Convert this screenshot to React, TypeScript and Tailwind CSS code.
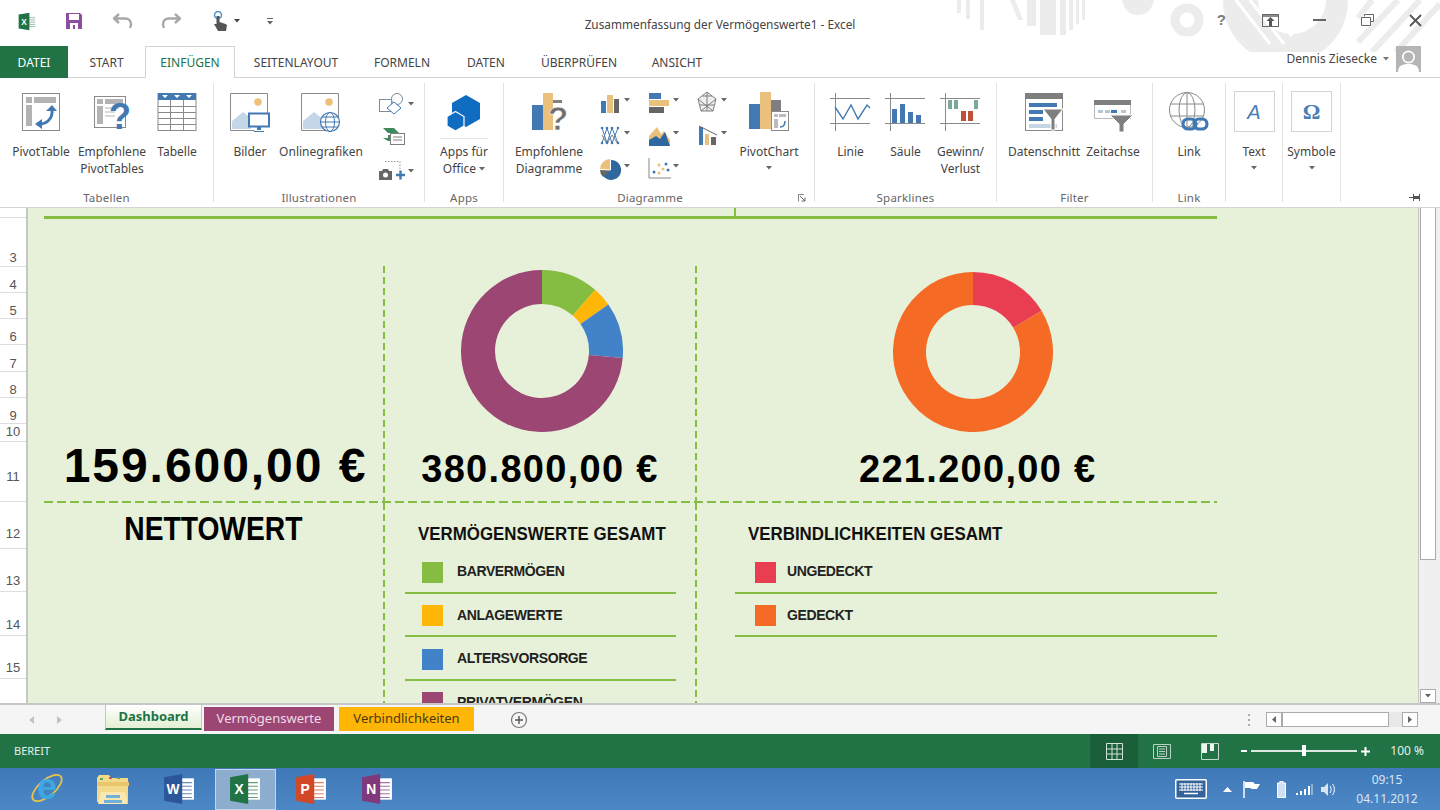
import type { ReactNode } from "react";

const BLUE = "#4379b3";
const TAN = "#e9c07c";
const GREY = "#7f7f7f";
const LINE = "#8a8a8a";

function Caret({ color = "#555" }: { color?: string }) {
  return (
    <svg width="6" height="4" viewBox="0 0 6 4" className="shrink-0">
      <path d="M0 0h6L3 3.5z" fill={color} />
    </svg>
  );
}

function OfficeIcon({ letter, color, size = 32 }: { letter: string; color: string; size?: number }) {
  return (
    <svg width={size} height={size} viewBox="0 0 30 30" className="overflow-visible">
      <rect x="14" y="5" width="15" height="20" fill="#fff" />
      <path d="M17 9h10M17 12.5h10M17 16h10M17 19.5h10M17 23h10" stroke={color} strokeWidth="1" opacity="0.7" />
      <path d="M1 4 18 1v28L1 26z" fill={color} />
      <text x="9.5" y="20" textAnchor="middle" fontFamily="Liberation Sans" fontWeight="700" fontSize="13" fill="#fff">
        {letter}
      </text>
    </svg>
  );
}

function TitleArt() {
  return (
    <svg width="490" height="52" viewBox="950 0 490 52" className="absolute right-0 top-0">
      <g fill="#ececec">
        <path d="M957 0h4v13h-4zM966 0h4v19h-4zM980 0h4v30h-4zM1010 0h5l8 20h-5zM1027 0h9v26h-9zM1040 0h16v35h-16zM1060 0h6v35h-6zM1069 0h4v30h-4zM1076 0h3v24h-3zM1082 0h3v20h-3z" />
        <path d="M1122 0h32c-2 10-8 15-16 15s-14-5-16-15z" />
      </g>
      <circle cx="1187" cy="20" r="12" fill="none" stroke="#ececec" strokeWidth="9" />
      <path d="M1223 0h125c0 22-10 40-27 52h-71c-17-12-27-30-27-52z" fill="#ececec" />
      <path d="M1236 0l34 44M1250 0l34 44M1264 0l28 36" stroke="#fff" strokeWidth="3" />
      <circle cx="1292" cy="0" r="34" fill="#fff" />
      <path d="M1372 0l-14 18M1398 0l-40 42M1420 0l-48 52M1440 4l-44 48" stroke="#ececec" strokeWidth="6" />
    </svg>
  );
}

function QuickAccess() {
  return (
    <div className="flex h-[46px] items-center pb-[4px] pl-[18px]">
      <div className="w-[47px]">
        <OfficeIcon letter="X" color="#217346" size={19} />
      </div>
      <svg width="18" height="18" viewBox="0 0 18 18" className="mr-[30px]">
        <path d="M1 1h14l2 2v14H1z" fill="#8e4ea0" />
        <rect x="4" y="2" width="10" height="6" fill="#fff" />
        <rect x="5" y="11" width="8" height="6" fill="#fff" />
        <rect x="8" y="13" width="2" height="4" fill="#8e4ea0" />
      </svg>
      <svg width="20" height="16" viewBox="0 0 20 16" className="mr-[28px]">
        <path d="M6 1 1 5.500 6 10M2 5.500h10c4 0 6 2.500 6 5.500 0 1.500-.5 3-1 4" fill="none" stroke="#a8a8a8" strokeWidth="2.400" />
      </svg>
      <svg width="20" height="16" viewBox="0 0 20 16" className="mr-[31px]">
        <path d="M14 1l5 4.500L14 10M18 5.500H8c-4 0-6 2.500-6 5.500 0 1.500.5 3 1 4" fill="none" stroke="#a8a8a8" strokeWidth="2.400" />
      </svg>
      <svg width="17" height="20" viewBox="0 0 17 20" className="mr-[5px]">
        <circle cx="6" cy="4" r="3.500" fill="none" stroke="#4a90c8" strokeWidth="1.500" />
        <path d="M4.500 5h3v6l6 2 1.500 1-1 6H6L2 13l2.500 0z" fill="#555" />
      </svg>
      <div className="mr-[27px]">
        <Caret color="#444" />
      </div>
      <svg width="6" height="7" viewBox="0 0 6 7">
        <path d="M0 0h6v1H0zM0 3h6L3 6.500z" fill="#666" />
      </svg>
    </div>
  );
}

function WindowButtons() {
  return (
    <div className="absolute right-0 top-0 flex h-[40px] items-center pr-[18px] text-[#666]">
      <span className="mr-[36px] font-['Liberation_Sans'] text-[15px] font-bold text-[#7a7a7a]">?</span>
      <svg width="17" height="13" viewBox="0 0 17 13" className="mr-[34px]">
        <rect x="0.500" y="0.500" width="16" height="12" fill="none" stroke="#666" />
        <path d="M1 2h15" stroke="#666" strokeWidth="1.500" />
        <path d="M8.500 3 4.500 7H7v5h3V7h2.500z" fill="#555" />
      </svg>
      <div className="mr-[35px] h-[2px] w-[13px] bg-[#666]" />
      <svg width="13" height="12" viewBox="0 0 13 12" className="mr-[35px]">
        <path d="M3.500 2.500V.5h9v7h-3M.5 3.500h9v8h-9z" fill="none" stroke="#666" />
      </svg>
      <svg width="13" height="13" viewBox="0 0 13 13">
        <path d="M1 1l11 11M12 1 1 12" stroke="#555" strokeWidth="1.800" />
      </svg>
    </div>
  );
}

function RibbonTabs() {
  const tabs = [
    { label: "START", width: "w-[77px]" },
    { label: "EINFÜGEN", width: "w-[90px]", active: true },
    { label: "SEITENLAYOUT", width: "w-[122px]" },
    { label: "FORMELN", width: "w-[90px]" },
    { label: "DATEN", width: "w-[78px]" },
    { label: "ÜBERPRÜFEN", width: "w-[108px]" },
    { label: "ANSICHT", width: "w-[88px]" },
  ];
  return (
    <div className="relative flex h-[32px] border-b border-[#d4d4d4]">
      <div className="flex h-[32px] w-[68px] items-center justify-center bg-[#217346] pt-[1px] text-[12px] text-white">DATEI</div>
      {tabs.map((tab) => (
        <div
          key={tab.label}
          className={`${tab.width} flex h-[32px] items-center justify-center pt-[1px] text-[12px] ${
            tab.active ? "border-x border-t border-[#d4d4d4] bg-white text-[#217346]" : "text-[#444]"
          }`}
        >
          {tab.label}
        </div>
      ))}
      <div className="ml-auto flex items-center gap-[6px] pb-[6px] pr-[19px]">
        <span className="text-[12px] text-[#444]">Dennis Ziesecke</span>
        <span className="mr-[1px]">
          <Caret color="#777" />
        </span>
        <svg width="25" height="26" viewBox="0 0 25 26">
          <rect width="25" height="26" fill="#b5b5b5" />
          <circle cx="12.500" cy="11" r="6.500" fill="#fff" />
          <path d="M2 26c0-6 4-8 10.500-8S23 20 23 26z" fill="#fff" />
          <circle cx="12.500" cy="11" r="4.800" fill="#b5b5b5" />
        </svg>
      </div>
    </div>
  );
}

function RibbonGroup({ label, width, launcher, children }: { label: string; width: string; launcher?: boolean; children: ReactNode }) {
  return (
    <div className={`${width} flex shrink-0`}>
      <div className="flex min-w-0 flex-1 flex-col">
        <div className="flex min-h-0 flex-1 pt-[13px]">{children}</div>
        <div className={`relative h-[17px] text-center text-[11.500px] leading-[16px] tracking-[0.2px] text-[#666] ${launcher ? "pr-[18px]" : ""}`}>
          {label}
          {launcher && (
            <svg width="8" height="8" viewBox="0 0 8 8" className="absolute right-[8px] top-[4px]">
              <path d="M.5 3V.5H6M.5.5v7" fill="none" stroke="#888" />
              <path d="M2 2l5 5M7 3.500V7H3.500" fill="none" stroke="#666" />
            </svg>
          )}
        </div>
      </div>
      <div className="mt-[5px] h-[119px] w-px bg-[#e2e2e2]" />
    </div>
  );
}

function RibbonButton({ width, icon, lines, caret }: { width: string; icon: ReactNode; lines: string[]; caret?: boolean }) {
  return (
    <div className={`${width} flex shrink-0 flex-col items-center`}>
      <div className="flex h-[52px] justify-center">{icon}</div>
      {lines.map((line) => (
        <span key={line} className="whitespace-nowrap text-[12px] leading-[17px] text-[#444]">
          {line}
        </span>
      ))}
      {caret && (
        <span className="mt-[6px]">
          <Caret color="#666" />
        </span>
      )}
    </div>
  );
}

function Svg40({ children }: { children: ReactNode }) {
  return (
    <svg width="40" height="42" viewBox="0 0 40 42" className="overflow-visible">
      {children}
    </svg>
  );
}

const PivotIcon = (
  <Svg40>
    <rect x="1.500" y="2.500" width="37" height="37" fill="#fff" stroke={LINE} />
    <path d="M5 6h6v6H5zM13 6h22v6H13zM5 14h6v21H5z" fill="#b3b3b3" />
    <path d="M16 33c9 1 16-5 15-14" fill="none" stroke={BLUE} strokeWidth="3" />
    <path d="M25 20l6-6 5 6zM21 28v10l-7-5z" fill={BLUE} />
  </Svg40>
);

const RecommendedPivotIcon = (
  <Svg40>
    <rect x="2.500" y="5.500" width="31" height="31" fill="#fff" stroke={LINE} />
    <path d="M5 8h6v5H5zM13 8h18v5H13zM5 15h6v18H5z" fill="#b3b3b3" />
    <path d="M13 17h14M13 21h10M13 25h10" stroke="#b3b3b3" />
    <text x="28" y="38" textAnchor="middle" fontFamily="Liberation Sans" fontWeight="700" fontSize="36" fill={BLUE}>
      ?
    </text>
  </Svg40>
);

const TableIcon = (
  <Svg40>
    <rect x="1" y="2.500" width="38" height="37" fill="#fff" stroke={LINE} />
    <rect x="1" y="2" width="38" height="7" fill={BLUE} />
    <path d="M5 4h6l-3 3zM17 4h6l-3 3zM29 4h6l-3 3z" fill="#fff" />
    <path d="M1 15.500h38M1 21.500h38M1 27.500h38M1 33.500h38M13.500 9v30M26.500 9v30" stroke={LINE} />
  </Svg40>
);

function Picture({ children }: { children: ReactNode }) {
  return (
    <svg width="42" height="42" viewBox="0 0 42 42">
      <path d="M38.500 28V2.500H1.500v37h24" fill="#fff" stroke={LINE} />
      <circle cx="29" cy="11" r="3.800" fill="#eec07a" />
      <path d="M3 38V30l11-9 9 7-1 10z" fill="#c5d6e8" />
      {children}
    </svg>
  );
}

const PicturesIcon = (
  <Picture>
    <rect x="20" y="22.500" width="20" height="13" fill="#fff" stroke={BLUE} strokeWidth="2" />
    <path d="M28 36h4v3h-4zM25 40h10v1H25z" fill={BLUE} />
  </Picture>
);

const OnlineIcon = (
  <Picture>
    <circle cx="30" cy="31" r="9.500" fill="#fff" stroke={BLUE} strokeWidth="1.200" />
    <ellipse cx="30" cy="31" rx="4.500" ry="9.500" fill="none" stroke={BLUE} />
    <path d="M20.500 31h19M22 26h16M22 36h16" stroke={BLUE} />
  </Picture>
);

function SmallIllustrations() {
  return (
    <div className="flex w-[50px] flex-col items-center">
      <div className="flex h-[27px] items-center gap-[1px] pb-[2px] pl-[2px]">
        <svg width="28" height="22" viewBox="0 0 28 22">
          <rect x="0.500" y="6.500" width="12" height="12" fill="none" stroke="#7d8d9b" />
          <circle cx="18" cy="6" r="5.500" fill="#fff" stroke="#7d8d9b" />
          <path d="M15 9l7 6-7 6-7-6z" fill="#fff" stroke={BLUE} />
        </svg>
        <Caret color="#666" />
      </div>
      <div className="flex h-[37px] items-center pr-[2px]">
        <svg width="22" height="17" viewBox="0 0 22 17">
          <path d="M0 0h11l5 5H5z" fill="#3d8a5c" />
          <path d="M0 10h5l0-3h5v6H5z" fill="#3d8a5c" />
          <rect x="7.500" y="5.500" width="14" height="11" fill="#fff" stroke={GREY} />
          <path d="M10 9h9M10 12h9" stroke={GREY} />
        </svg>
      </div>
      <div className="flex h-[32px] items-center gap-[2px] pl-[3px]">
        <svg width="27" height="22" viewBox="0 0 27 22">
          <path d="M6 1.500h15v9" fill="none" stroke="#999" strokeDasharray="1.500 1.500" />
          <path d="M0 11h3l1-2h5l1 2h3v9H0z" fill="#666" />
          <circle cx="6.500" cy="15" r="2.500" fill="#fff" />
          <path d="M17 15h9M21.500 10.500v9" stroke={BLUE} strokeWidth="2.400" />
        </svg>
        <Caret color="#666" />
      </div>
    </div>
  );
}

const AppsIcon = (
  <svg width="36" height="42" viewBox="0 0 36 42">
    <path d="M20 4l14 8v16l-14 8-14-8V12z" fill="#0f6cc0" />
    <path d="M9.500 20.500l8.500 5v9.500l-8.500 5-8.500-5v-9.500z" fill="#0f6cc0" stroke="#fff" strokeWidth="1.200" />
  </svg>
);

const RecommendedChartIcon = (
  <Svg40>
    <rect x="3" y="14" width="11" height="25" fill={BLUE} />
    <rect x="14" y="2" width="10" height="37" fill={TAN} />
    <rect x="24" y="9" width="9" height="3" fill={GREY} />
    <text x="29" y="39" textAnchor="middle" fontFamily="Liberation Sans" fontWeight="700" fontSize="33" fill="#6f6f6f" stroke="#fff" strokeWidth="0.500">
      ?
    </text>
  </Svg40>
);

function ChartGlyph({ children }: { children: ReactNode }) {
  return (
    <div className="flex h-[33px] w-[48px] items-start justify-center gap-[1px] pl-[5px]">
      <svg width="24" height="24" viewBox="0 0 24 24">
        {children}
      </svg>
      <span className="mt-[7px]">
        <Caret color="#666" />
      </span>
    </div>
  );
}

function SmallCharts() {
  return (
    <div className="grid h-[99px] w-[146px] grid-flow-col grid-cols-3 grid-rows-[33px_33px_33px]">
      <ChartGlyph>
        <path d="M2 10h5v12H2z" fill={BLUE} />
        <path d="M8 4h6v18H8z" fill={TAN} />
        <path d="M15 8h5v14h-5z" fill="#666" />
      </ChartGlyph>
      <ChartGlyph>
        <path d="M3 4l5 15 5-15 6 15M3 19l5-15 5 15 6-15" fill="none" stroke={BLUE} strokeWidth="1" />
        <path d="M3 11l5 9 5-9 6 9" fill="none" stroke={GREY} />
        <g fill={BLUE}>
          <circle cx="3" cy="4" r="1.300" />
          <circle cx="8" cy="19" r="1.300" />
          <circle cx="13" cy="4" r="1.300" />
          <circle cx="19" cy="19" r="1.300" />
          <circle cx="3" cy="19" r="1.300" />
          <circle cx="8" cy="4" r="1.300" />
          <circle cx="13" cy="19" r="1.300" />
          <circle cx="19" cy="4" r="1.300" />
        </g>
      </ChartGlyph>
      <ChartGlyph>
        <path d="M11 2a10 10 0 0 0-10 10l10 .5z" fill={TAN} />
        <path d="M12 3a10 10 0 1 1-9 14l9-4z" fill="#2f689f" />
        <path d="M1 13l10 .5-7 6.500a10 10 0 0 1-3-7z" fill="#666" />
      </ChartGlyph>
      <ChartGlyph>
        <path d="M1 2h12v6H1z" fill={BLUE} />
        <path d="M1 9h20v6H1z" fill={TAN} />
        <path d="M1 16h15v6H1z" fill="#666" />
      </ChartGlyph>
      <ChartGlyph>
        <path d="M1 22V12l8-9 4 7 3-3 6 9v6z" fill={TAN} />
        <path d="M1 22v-6l7-4 4 3 5-7 5 14z" fill="#2f689f" />
      </ChartGlyph>
      <ChartGlyph>
        <path d="M1 21h22M1 1v20" stroke="#888" />
        <circle cx="6" cy="15" r="1.500" fill={BLUE} />
        <circle cx="11" cy="8" r="1.500" fill={TAN} />
        <circle cx="15" cy="12" r="1.500" fill={TAN} />
        <circle cx="18" cy="7" r="1.500" fill={BLUE} />
        <circle cx="20" cy="13" r="1.500" fill={BLUE} />
        <circle cx="11" cy="16" r="1.500" fill={TAN} />
      </ChartGlyph>
      <ChartGlyph>
        <path d="M11 1l9 7-3 12H5L2 8z" fill="#eee" stroke={GREY} />
        <path d="M11 1v19M2 8l15 12M20 8 5 20M4 14h14M6 5h10" stroke={GREY} />
      </ChartGlyph>
      <ChartGlyph>
        <path d="M3 3h4v18H3z" fill={BLUE} />
        <path d="M9 10h4v11H9z" fill={TAN} />
        <path d="M15 13h5v8h-5z" fill="#666" />
        <path d="M3 2l18 9" stroke="#666" />
      </ChartGlyph>
    </div>
  );
}

const PivotChartIcon = (
  <Svg40>
    <rect x="0" y="13" width="11" height="25" fill={BLUE} />
    <rect x="11" y="1" width="11" height="37" fill={TAN} />
    <rect x="22" y="9" width="10" height="14" fill={GREY} />
    <rect x="22.500" y="20.500" width="17" height="19" fill="#fff" stroke={LINE} />
    <path d="M25 23h4v3h-4zM30 23h7v3h-7zM25 28h4v9h-4z" fill="#bbb" />
    <path d="M31 36c3 0 5-2 5-6" fill="none" stroke={BLUE} strokeWidth="1.500" />
  </Svg40>
);

function SparkFrame({ children }: { children: ReactNode }) {
  return (
    <svg width="42" height="42" viewBox="0 0 42 42">
      <path d="M0 7.500h40M0 32.500h40M5.500 2v38" stroke={LINE} />
      {children}
    </svg>
  );
}

const LineSpark = (
  <SparkFrame>
    <path d="M5 16l8 12 8-14 7 14 9-14 3 3" fill="none" stroke={BLUE} strokeWidth="1.400" />
  </SparkFrame>
);

const ColumnSpark = (
  <SparkFrame>
    <path d="M7 18h5v14H7zM15 13h5v19h-5zM23 21h5v11h-5zM31 24h5v8h-5z" fill={BLUE} />
  </SparkFrame>
);

const WinLossSpark = (
  <SparkFrame>
    <path d="M8 9h4v9H8zM14 9h4v9h-4zM34 9h4v9h-4z" fill="#7aa99a" />
    <path d="M21 20h5v10h-5zM28 20h5v10h-5z" fill="#c1503a" />
  </SparkFrame>
);

const SlicerIcon = (
  <Svg40>
    <rect x="1.500" y="2.500" width="37" height="37" fill="#fff" stroke={LINE} />
    <rect x="1" y="2" width="38" height="6" fill={GREY} />
    <path d="M5 12h28v4H5zM5 19h14v4H5zM5 26h14v4H5z" fill={BLUE} />
    <path d="M5 33h28v4H5z" fill="#c6d4e4" />
    <path d="M19 18h20L31 28v11h-4V28z" fill={GREY} stroke="#fff" />
  </Svg40>
);

const TimelineIcon = (
  <Svg40>
    <rect x="1.500" y="9.500" width="36" height="18" fill="#fff" stroke="#bbb" />
    <rect x="1" y="9" width="37" height="5" fill={GREY} />
    <path d="M5 19h5v3H5zM12 19h5v3h-5zM28 19h5v3h-5z" fill="#b9c6d4" />
    <path d="M18 19h6v3h-6z" fill={BLUE} />
    <path d="M17 24h23l-9 9v8h-5v-8z" fill={GREY} stroke="#fff" />
  </Svg40>
);

const LinkIcon = (
  <svg width="42" height="42" viewBox="0 0 42 42">
    <circle cx="19" cy="19" r="17.500" fill="#fff" stroke={LINE} />
    <ellipse cx="19" cy="19" rx="8" ry="17.500" fill="none" stroke={LINE} />
    <path d="M2 13h34M2 25h34M19 2v34" stroke={LINE} />
    <rect x="15" y="28" width="13" height="10" rx="5" fill="none" stroke="#3f78b2" strokeWidth="3.200" />
    <rect x="26" y="28" width="13" height="10" rx="5" fill="none" stroke="#3f78b2" strokeWidth="3.200" />
  </svg>
);

function BoxIcon({ children }: { children: ReactNode }) {
  return (
    <div className="flex h-[41px] w-[41px] items-center justify-center border border-[#d4d4d4] bg-white font-['Liberation_Serif'] text-[#4a7eb5]">
      {children}
    </div>
  );
}

function Ribbon() {
  return (
    <div className="flex h-[130px] border-b border-[#d4d4d4]">
      <RibbonGroup label="Tabellen" width="w-[214px]">
        <div className="w-[6px]" />
        <RibbonButton width="w-[70px]" icon={PivotIcon} lines={["PivotTable"]} />
        <RibbonButton width="w-[72px]" icon={RecommendedPivotIcon} lines={["Empfohlene", "PivotTables"]} />
        <RibbonButton width="w-[58px]" icon={TableIcon} lines={["Tabelle"]} />
      </RibbonGroup>
      <RibbonGroup label="Illustrationen" width="w-[211px]">
        <div className="w-[8px]" />
        <RibbonButton width="w-[56px]" icon={PicturesIcon} lines={["Bilder"]} />
        <RibbonButton width="w-[86px]" icon={OnlineIcon} lines={["Onlinegrafiken"]} />
        <div className="w-[6px]" />
        <SmallIllustrations />
      </RibbonGroup>
      <RibbonGroup label="Apps" width="w-[79px]">
        <div className="flex w-full flex-col items-center">
          <div className="flex h-[52px] flex-col items-center">
            {AppsIcon}
            <div className="mt-[5px] h-px w-[48px] bg-[#e2e2e2]" />
          </div>
          <span className="text-[12px] leading-[17px] text-[#444]">Apps für</span>
          <span className="flex items-center gap-[3px] text-[12px] leading-[17px] text-[#444]">
            Office <Caret color="#666" />
          </span>
        </div>
      </RibbonGroup>
      <RibbonGroup label="Diagramme" width="w-[311px]" launcher>
        <div className="w-[6px]" />
        <RibbonButton width="w-[78px]" icon={RecommendedChartIcon} lines={["Empfohlene", "Diagramme"]} />
        <SmallCharts />
        <RibbonButton width="w-[70px]" icon={PivotChartIcon} lines={["PivotChart"]} caret />
      </RibbonGroup>
      <RibbonGroup label="Sparklines" width="w-[182px]">
        <div className="w-[8px]" />
        <RibbonButton width="w-[55px]" icon={LineSpark} lines={["Linie"]} />
        <RibbonButton width="w-[55px]" icon={ColumnSpark} lines={["Säule"]} />
        <RibbonButton width="w-[55px]" icon={WinLossSpark} lines={["Gewinn/", "Verlust"]} />
      </RibbonGroup>
      <RibbonGroup label="Filter" width="w-[156px]">
        <div className="w-[11px]" />
        <RibbonButton width="w-[72px]" icon={SlicerIcon} lines={["Datenschnitt"]} />
        <RibbonButton width="w-[66px]" icon={TimelineIcon} lines={["Zeitachse"]} />
      </RibbonGroup>
      <RibbonGroup label="Link" width="w-[73px]">
        <RibbonButton width="w-full" icon={LinkIcon} lines={["Link"]} />
      </RibbonGroup>
      <RibbonGroup label="" width="w-[57px]">
        <RibbonButton
          width="w-full"
          icon={<BoxIcon><span className="font-['Liberation_Sans'] text-[20px] italic">A</span></BoxIcon>}
          lines={["Text"]}
          caret
        />
      </RibbonGroup>
      <RibbonGroup label="" width="w-[58px]">
        <RibbonButton
          width="w-full"
          icon={<BoxIcon><span className="text-[22px] font-bold">Ω</span></BoxIcon>}
          lines={["Symbole"]}
          caret
        />
      </RibbonGroup>
      <div className="flex flex-1 items-end justify-end pb-[5px] pr-[19px]">
        <svg width="12" height="9" viewBox="0 0 12 9">
          <path d="M0 4h4v1H0zM4 1h1v7H4zM5 3h5v3H5zM10 1h1v7h-1z" fill="#555" />
        </svg>
      </div>
    </div>
  );
}

const ROWS = [
  { label: "", height: "h-[10px]", pad: "pb-0" },
  { label: "3", height: "h-[49px]", pad: "pb-[1px]" },
  { label: "4", height: "h-[26px]", pad: "pb-0" },
  { label: "5", height: "h-[26px]", pad: "pb-0" },
  { label: "6", height: "h-[26px]", pad: "pb-0" },
  { label: "7", height: "h-[27px]", pad: "pb-0" },
  { label: "8", height: "h-[26px]", pad: "pb-0" },
  { label: "9", height: "h-[26px]", pad: "pb-0" },
  { label: "10", height: "h-[18px]", pad: "pb-[2px]" },
  { label: "11", height: "h-[60px]", pad: "pb-[17px]" },
  { label: "12", height: "h-[47px]", pad: "pb-[7px]" },
  { label: "13", height: "h-[43px]", pad: "pb-[3px]" },
  { label: "14", height: "h-[44px]", pad: "pb-[3px]" },
  { label: "15", height: "h-[43px]", pad: "pb-[3px]" },
  { label: "", height: "h-[26px]", pad: "pb-0" },
];

function RowHeaders() {
  return (
    <div className="flex w-[28px] shrink-0 flex-col overflow-hidden border-r-2 border-[#c6c6c6] bg-white">
      {ROWS.map((row, index) => (
        <div
          key={index}
          className={`${row.height} ${row.pad} flex shrink-0 items-end justify-center border-b border-[#dedede] font-['Liberation_Sans'] text-[13px] leading-[14px] text-[#555]`}
        >
          {row.label}
        </div>
      ))}
    </div>
  );
}

function polar(cx: number, cy: number, r: number, deg: number) {
  const a = ((deg - 90) * Math.PI) / 180;
  return `${(cx + r * Math.cos(a)).toFixed(2)} ${(cy + r * Math.sin(a)).toFixed(2)}`;
}

function Donut({ outer, inner, slices }: { outer: number; inner: number; slices: { color: string; from: number; to: number }[] }) {
  const c = outer;
  return (
    <svg width={outer * 2} height={outer * 2} viewBox={`0 0 ${outer * 2} ${outer * 2}`}>
      {slices.map((s) => {
        const large = s.to - s.from > 180 ? 1 : 0;
        return (
          <path
            key={s.color}
            fill={s.color}
            d={`M${polar(c, c, outer, s.from)}A${outer} ${outer} 0 ${large} 1 ${polar(c, c, outer, s.to)}L${polar(c, c, inner, s.to)}A${inner} ${inner} 0 ${large} 0 ${polar(c, c, inner, s.from)}Z`}
          />
        );
      })}
    </svg>
  );
}

function VDash() {
  return <div className="w-[2px] shrink-0 bg-[repeating-linear-gradient(180deg,#84bd41_0_7px,transparent_7px_11px)]" />;
}

function LegendRow({ color, label, indent, gap }: { color: string; label: string; indent: string; gap: string }) {
  return (
    <div className="flex h-[43.500px] shrink-0 items-center border-b-2 border-[#84bd41] pt-[2px]">
      <div className={`${color} ${indent} mt-[1px] h-[21px] w-[21px] shrink-0`} />
      <span className={`${gap} whitespace-nowrap font-['Liberation_Sans'] text-[14px] font-bold tracking-[-0.4px] text-[#222]`}>
        {label}
      </span>
    </div>
  );
}

function Sheet() {
  return (
    <div className="min-w-0 flex-1 overflow-hidden bg-[#e7f1d9] pl-[16px] font-['Liberation_Sans']">
      <div className="w-[1173px]">
        <div className="h-[8px] pl-[690px]">
          <div className="h-full w-[2px] bg-[#84bd41]" />
        </div>
        <div className="h-[3px] bg-[#84bd41]" />
        <div className="h-[47px]" />
        <div className="flex h-[235px]">
          <div className="flex w-[339px] flex-col items-center justify-end pb-[7px] pl-[4px]">
            <div className="text-[48px] font-bold leading-[56px] tracking-[1.950px] text-black">159.600,00 €</div>
          </div>
          <VDash />
          <div className="flex w-[310px] flex-col items-center justify-end pb-[10px]">
            <div className="mb-[15px] ml-[3px]">
              <Donut
                outer={81}
                inner={47}
                slices={[
                  { color: "#84bd41", from: 0, to: 41 },
                  { color: "#ffb606", from: 41, to: 55 },
                  { color: "#4182c8", from: 55, to: 95 },
                  { color: "#9c4674", from: 95, to: 360 },
                ]}
              />
            </div>
            <div className="text-[38px] font-bold leading-[44px] tracking-[1.300px] text-black">380.800,00 €</div>
          </div>
          <VDash />
          <div className="flex flex-1 flex-col justify-end pb-[10px]">
            <div className="mb-[15px] ml-[196px]">
              <Donut
                outer={80}
                inner={47}
                slices={[
                  { color: "#e93e52", from: 0, to: 59 },
                  { color: "#f56a25", from: 59, to: 360 },
                ]}
              />
            </div>
            <div className="ml-[162px] text-[38px] font-bold leading-[44px] tracking-[1.300px] text-black">221.200,00 €</div>
          </div>
        </div>
        <div className="h-[2px] bg-[repeating-linear-gradient(90deg,#84bd41_0_9px,transparent_9px_13px)]" />
        <div className="flex h-[220px]">
          <div className="w-[339px] pt-[5px] text-center leading-[40px]">
            <span className="inline-block scale-x-[0.83] whitespace-nowrap text-[34px] font-bold text-black">NETTOWERT</span>
          </div>
          <VDash />
          <div className="w-[310px]">
            <div className="ml-[33px] origin-left scale-x-[0.889] whitespace-nowrap pt-[19px] text-[19px] font-bold leading-[24px] text-[#111]">
              VERMÖGENSWERTE GESAMT
            </div>
            <div className="ml-[20px] w-[271px]">
              <div className="h-[4px]" />
              <LegendRow color="bg-[#84bd41]" label="BARVERMÖGEN" indent="ml-[17px]" gap="ml-[14px]" />
              <LegendRow color="bg-[#ffb606]" label="ANLAGEWERTE" indent="ml-[17px]" gap="ml-[14px]" />
              <LegendRow color="bg-[#4182c8]" label="ALTERSVORSORGE" indent="ml-[17px]" gap="ml-[14px]" />
              <LegendRow color="bg-[#9c4674]" label="PRIVATVERMÖGEN" indent="ml-[17px]" gap="ml-[14px]" />
            </div>
          </div>
          <VDash />
          <div className="flex-1">
            <div className="ml-[51px] origin-left scale-x-[0.889] whitespace-nowrap pt-[19px] text-[19px] font-bold leading-[24px] text-[#111]">
              VERBINDLICHKEITEN GESAMT
            </div>
            <div className="ml-[38px]">
              <div className="h-[4px]" />
              <LegendRow color="bg-[#e93e52]" label="UNGEDECKT" indent="ml-[20px]" gap="ml-[11px]" />
              <LegendRow color="bg-[#f56a25]" label="GEDECKT" indent="ml-[20px]" gap="ml-[11px]" />
            </div>
          </div>
        </div>
      </div>
    </div>
  );
}

function VerticalScroll() {
  return (
    <div className="flex w-[22px] shrink-0 flex-col border-l border-[#c6c6c6] bg-[#f0f0f0] pl-[1px] pr-[4px]">
      <div className="h-[352px] border border-t-0 border-[#ababab] bg-white" />
      <div className="flex-1" />
      <div className="flex h-[14px] items-center justify-center border border-[#ababab] bg-white">
        <Caret color="#666" />
      </div>
    </div>
  );
}

function SheetTabs() {
  return (
    <div className="flex h-[29px] shrink-0 bg-[#f5f5f5] text-[13px]">
      <div className="flex w-[105px] items-center justify-center gap-[22px] pr-[14px]">
        <svg width="6" height="8" viewBox="0 0 6 8"><path d="M5 0v8L0 4z" fill="#c4c4c4" /></svg>
        <svg width="6" height="8" viewBox="0 0 6 8"><path d="M0 0v8l5-4z" fill="#c4c4c4" /></svg>
      </div>
      <div className="flex h-[25px] w-[97px] items-center justify-center border-x border-b-2 border-[#c6c6c6] border-b-[#217346] bg-[linear-gradient(180deg,#fff,#e3efd3)] font-['Noto_Sans'] font-bold text-[#217346]">
        Dashboard
      </div>
      <div className="ml-[2px] mt-[2px] flex h-[24px] w-[130px] items-center justify-center bg-[#9c4674] font-['Noto_Sans'] text-[#f0dce8]">
        Vermögenswerte
      </div>
      <div className="ml-[5px] mt-[2px] flex h-[24px] w-[135px] items-center justify-center bg-[#ffb606] font-['Noto_Sans'] text-[#4a3a10]">
        Verbindlichkeiten
      </div>
      <div className="ml-[36px] flex h-[29px] items-center">
        <svg width="18" height="18" viewBox="0 0 18 18">
          <circle cx="9" cy="9" r="7.500" fill="none" stroke="#777" strokeWidth="1.200" />
          <path d="M9 5v8M5 9h8" stroke="#555" strokeWidth="1.400" />
        </svg>
      </div>
      <div className="ml-auto flex items-center pr-[22px]">
        <svg width="3" height="12" viewBox="0 0 3 12" className="mr-[15px]">
          <path d="M0 0h2v2H0zM0 5h2v2H0zM0 10h2v2H0z" fill="#aaa" />
        </svg>
        <div className="flex h-[15px] w-[16px] items-center justify-center border border-[#ababab] bg-white">
          <svg width="4" height="7" viewBox="0 0 4 7"><path d="M4 0v7L0 3.500z" fill="#666" /></svg>
        </div>
        <div className="h-[15px] w-[107px] border border-[#ababab] bg-white" />
        <div className="h-[15px] w-[13px] bg-[#e8e8e8]" />
        <div className="flex h-[15px] w-[16px] items-center justify-center border border-[#ababab] bg-white">
          <svg width="4" height="7" viewBox="0 0 4 7"><path d="M0 0v7l4-3.500z" fill="#666" /></svg>
        </div>
      </div>
    </div>
  );
}

function StatusBar() {
  return (
    <div className="flex h-[34px] shrink-0 items-center bg-[#217346] pl-[14px] text-[11px] text-[#e6efe9]">
      <span>BEREIT</span>
      <div className="ml-auto flex h-full items-center pr-[16px]">
        <div className="flex h-full w-[48px] items-center justify-center bg-[#1a5f39]">
          <svg width="17" height="17" viewBox="0 0 17 17">
            <path d="M.5.5h16v16H.5zM.5 6h16M.5 11h16M6 .5v16M11 .5v16" fill="none" stroke="#d3e3d9" />
          </svg>
        </div>
        <div className="flex h-full w-[48px] items-center justify-center">
          <svg width="18" height="15" viewBox="0 0 18 15">
            <path d="M.5.5h17v14H.5zM4.500 2.500h9v10h-9zM6 5h6M6 7.500h6M6 10h6" fill="none" stroke="#b9d2c3" />
          </svg>
        </div>
        <div className="flex h-full w-[48px] items-center justify-center">
          <svg width="18" height="17" viewBox="0 0 18 17">
            <path d="M.5.5h17v16H.5z" fill="none" stroke="#c6dacd" />
            <path d="M1 1h5v9H1zM9 1h4v7H9z" fill="#eef5f0" />
          </svg>
        </div>
        <div className="ml-[7px] h-[2px] w-[6px] bg-white" />
        <div className="ml-[4px] flex h-[2px] w-[106px] justify-center bg-[#dce9e0]">
          <div className="-mt-[5px] h-[11px] w-[4px] bg-white" />
        </div>
        <svg width="9" height="9" viewBox="0 0 9 9" className="ml-[4px]">
          <path d="M0 3.500h9v2H0zM3.500 0h2v9h-2z" fill="#fff" />
        </svg>
        <span className="ml-[20px] whitespace-nowrap text-[12px]">100 %</span>
      </div>
    </div>
  );
}

function Taskbar() {
  const apps = [
    { letter: "W", color: "#2b579a" },
    { letter: "X", color: "#217346", active: true },
    { letter: "P", color: "#d24726" },
    { letter: "N", color: "#80397b" },
  ];
  return (
    <div className="flex h-[42px] shrink-0 items-center bg-[linear-gradient(180deg,#3f78b8,#4d88c6)] pl-[14px]">
      <div className="flex w-[66px] justify-center">
        <svg width="34" height="36" viewBox="0 0 34 36" className="overflow-visible">
          <ellipse cx="17" cy="17" rx="18" ry="8" transform="rotate(-40 17 17)" fill="none" stroke="#e8c34a" strokeWidth="1.800" />
          <text x="17" y="28" textAnchor="middle" fontFamily="Liberation Sans" fontWeight="700" fontSize="36" fill="#3ba8e0">
            e
          </text>
        </svg>
      </div>
      <div className="flex w-[66px] justify-center">
        <svg width="34" height="34" viewBox="0 0 34 32">
          <path d="M1 5l2-3h10l2 3h17v24H1z" fill="#f3d98a" />
          <path d="M4 5h3v2H4z" fill="#5aa469" />
          <path d="M13 4h3v2h-3z" fill="#d0574a" />
          <path d="M21 4h3v2h-3z" fill="#5aa469" />
          <path d="M1 9h32v4H1z" fill="#e9c56b" />
          <path d="M2 31l3-12h24l3 12z" fill="#fbe8b0" />
          <path d="M10 22h14v3H10zM8 27h18v3H8z" fill="#6fb3dd" />
        </svg>
      </div>
      {apps.map((app) => (
        <div key={app.letter} className="flex w-[66px] justify-center">
          <div className={`flex h-[41px] w-[61px] items-center justify-center ${app.active ? "border border-[#c4d6e8] bg-[#8cadcd]" : ""}`}>
            <OfficeIcon letter={app.letter} color={app.color} />
          </div>
        </div>
      ))}
      <div className="ml-auto flex items-center pr-[24px]">
        <svg width="32" height="20" viewBox="0 0 32 20" className="mr-[16px]">
          <rect x="0.750" y="0.750" width="30.500" height="18.500" rx="1" fill="#33639a" stroke="#fff" strokeWidth="1.500" />
          <path d="M4 5h24M4 8h24M4 11h24M7 4v8M10 4v8M13 4v8M16 4v8M19 4v8M22 4v8M25 4v8" stroke="#fff" />
          <path d="M9 14.500h14" stroke="#fff" strokeWidth="1.500" />
        </svg>
        <svg width="9" height="5" viewBox="0 0 9 5" className="mr-[11px]">
          <path d="M4.500 0 9 5H0z" fill="#fff" />
        </svg>
        <svg width="17" height="19" viewBox="0 0 17 19" className="mr-[17px]">
          <path d="M1 1v17" stroke="#fff" strokeWidth="1.500" />
          <path d="M2 2h8l2 2h5l-3 5H9L7 8H2z" fill="#fff" />
        </svg>
        <svg width="9" height="17" viewBox="0 0 9 17" className="mr-[10px]">
          <path d="M3 0h3v2h2.500v14.500H.5V2H3z" fill="#cfe0f0" stroke="#fff" />
        </svg>
        <svg width="17" height="12" viewBox="0 0 17 12" className="mr-[7px]">
          <path d="M0 10h2v2H0zM4 8h2v4H4zM8 6h2v6H8zM12 3h2v9h-2z" fill="#fff" />
          <path d="M15 1h2v11h-2z" fill="#8fb2d4" />
        </svg>
        <svg width="16" height="15" viewBox="0 0 16 15" className="mr-[22px]">
          <path d="M1 5h3l4-4v13l-4-4H1z" fill="#d9e6f2" />
          <path d="M10 4c1.500 2 1.500 5 0 7M12.500 2c2.500 3 2.500 8 0 11" fill="none" stroke="#fff" />
        </svg>
        <div className="flex w-[58px] flex-col items-center whitespace-nowrap text-[12px] leading-[19px] text-[#dbe7f3]">
          <span>09:15</span>
          <span>04.11.2012</span>
        </div>
      </div>
    </div>
  );
}

export default function App() {
  return (
    <div className="flex h-[810px] w-[1440px] flex-col overflow-hidden bg-white font-['Noto_Sans',sans-serif]">
      <header className="relative h-[46px] shrink-0">
        <TitleArt />
        <QuickAccess />
        <div className="absolute left-0 right-0 top-[15px] text-center text-[11.800px] leading-[18px] text-[#444]">
          Zusammenfassung der Vermögenswerte1 - Excel
        </div>
        <WindowButtons />
      </header>
      <RibbonTabs />
      <Ribbon />
      <div className="flex h-[497px] shrink-0 border-b-2 border-[#c6c6c6]">
        <RowHeaders />
        <Sheet />
        <VerticalScroll />
      </div>
      <SheetTabs />
      <StatusBar />
      <Taskbar />
    </div>
  );
}
